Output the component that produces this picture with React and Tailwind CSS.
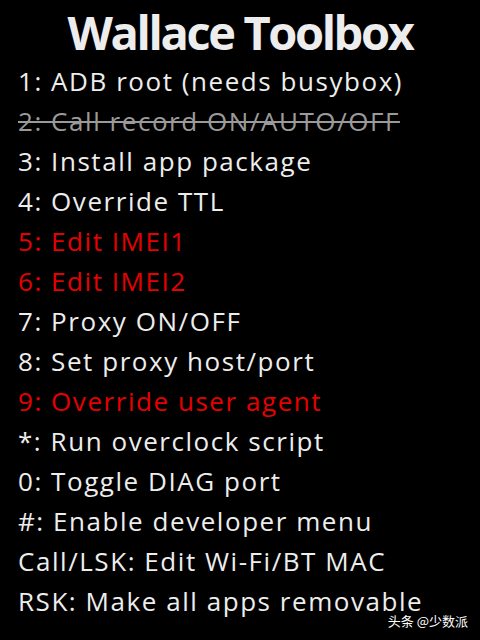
const ITEMS = [
  { text: "1: ADB root (needs busybox)", tone: "normal" },
  { text: "2: Call record ON/AUTO/OFF", tone: "off" },
  { text: "3: Install app package", tone: "normal" },
  { text: "4: Override TTL", tone: "normal" },
  { text: "5: Edit IMEI1", tone: "red" },
  { text: "6: Edit IMEI2", tone: "red" },
  { text: "7: Proxy ON/OFF", tone: "normal" },
  { text: "8: Set proxy host/port", tone: "normal" },
  { text: "9: Override user agent", tone: "red" },
  { text: "*: Run overclock script", tone: "normal" },
  { text: "0: Toggle DIAG port", tone: "normal" },
  { text: "#: Enable developer menu", tone: "normal" },
  { text: "Call/LSK: Edit Wi-Fi/BT MAC", tone: "normal" },
  { text: "RSK: Make all apps removable", tone: "normal" },
];

const TONES = {
  normal: "text-[#ededed]",
  red: "text-[#e60000]",
  off: "text-[#9a9a9a] line-through decoration-2",
};

export default function App() {
  return (
    <div className="relative w-[480px] h-[640px] bg-black overflow-hidden font-['Open_Sans',sans-serif]">
      <h1 className="pt-[4px] text-center text-[47px] leading-[57px] font-bold tracking-[-2.4px] text-[#ededed]">
        Wallace Toolbox
      </h1>
      <ul className="px-[18px] flex flex-col">
        {ITEMS.map((item) => (
          <li key={item.text} className={`text-[26px] leading-[40px] tracking-[1.55px] whitespace-nowrap ${TONES[item.tone]}`}>
            {item.text}
          </li>
        ))}
      </ul>

      {/* watermark */}
      <div className="absolute right-[12px] bottom-[11px] text-[13px] leading-[16px] text-white font-['Noto_Sans_CJK_SC',sans-serif]">
        头条 @少数派
      </div>
    </div>
  );
}
